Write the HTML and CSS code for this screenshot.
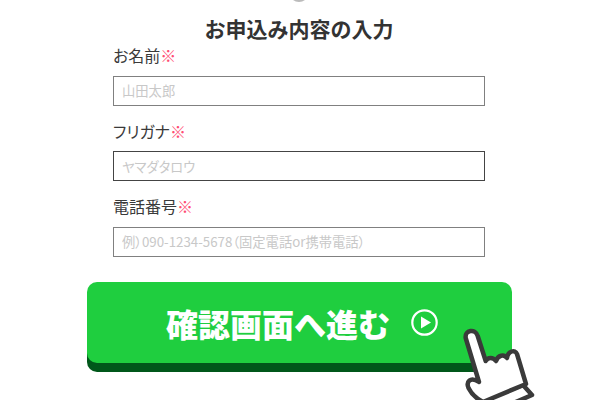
FILE: index.html
```html
<!DOCTYPE html>
<html lang="ja">
<head>
<meta charset="utf-8">
<title>お申込み内容の入力</title>
<link rel="stylesheet" href="styles.css">
</head>
<body>
<div class="page">
  <div class="knob-wrap"><div class="knob"></div></div>
  <h2 class="title">お申込み内容の入力</h2>
  <form class="form">
    <div class="field name-field">
      <label class="label">お名前<span class="req">※</span></label>
      <input class="input" type="text" placeholder="山田太郎">
    </div>
    <div class="field">
      <label class="label">フリガナ<span class="req">※</span></label>
      <input class="input dark" type="text" placeholder="ヤマダタロウ">
    </div>
    <div class="field">
      <label class="label">電話番号<span class="req">※</span></label>
      <input class="input" type="text" placeholder="例）090-1234-5678（固定電話or携帯電話）">
    </div>
  </form>
  <div class="cta-wrap">
    <button class="cta" type="button">
      <span>確認画面へ進む</span>
      <svg class="play" viewBox="0 0 27 27" width="27" height="27"><circle cx="13.5" cy="13.5" r="12.2" fill="none" stroke="#fff" stroke-width="2.2"/><path d="M10 7.5 20 13.5 10 19.5Z" fill="#fff"/></svg>
    </button>
    <svg class="hand" viewBox="0 0 85 75" width="85" height="75">
      <path d="M68 60 77 70 40 86 26 76Z" fill="#fff" stroke="#3a3a3a" stroke-width="4.5" stroke-linejoin="round"/>
      <path d="M10.7 13C9.5 5 20.5 3 22.7 11L30.7 36C33 32 38 32 41 36C43 30 49 29 52 33C53 26 60 24 62 29L71 59 28 77C22 74 17 70 13.5 63C11 57 15 51 24 57Z" fill="#fff" stroke="#3a3a3a" stroke-width="4.5" stroke-linejoin="round"/>
    </svg>
  </div>
</div>
</body>
</html>
```
FILE: styles.css
```css
* { box-sizing: border-box; }
html, body { margin: 0; padding: 0; background: #fff; }
body { width: 600px; height: 400px; overflow: hidden; font-family: "Noto Sans CJK JP", "Noto Sans", sans-serif; color: #333; }
.page { width: 598px; display: flex; flex-direction: column; align-items: center; }
.knob-wrap { width: 20px; height: 2px; overflow: hidden; }
.knob { width: 20px; height: 20px; margin-top: -18px; border-radius: 50%; background: #bbb; }
.title { margin: 10.5px 0 0; font-size: 21px; line-height: 30px; font-weight: 700; color: #333; }
.form { width: 372px; display: flex; flex-direction: column; gap: 13px; margin-top: 0.5px; }
.field { display: flex; flex-direction: column; gap: 8.5px; }
.label { font-size: 16px; line-height: 24px; color: #3a3a3a; font-feature-settings: "palt"; }
.req { color: #ff4d73; }
.input { width: 372px; height: 30px; padding: 0 8px; border: 1px solid #808080; border-radius: 0; background: #fff; font: 13.3px/28px "Noto Sans CJK JP", "Noto Sans", sans-serif; font-feature-settings: "palt"; outline: none; }
.input.dark { border-color: #444; }
.input::placeholder { color: #c8c8c8; opacity: 1; }
.cta-wrap { position: relative; margin-top: 25.5px; }
.cta { width: 425px; height: 81px; padding: 0 0 0 6px; display: flex; align-items: center; justify-content: center; gap: 21px; border: 0; border-radius: 10px; background: #1fce3f; box-shadow: 0 9px 0 #00571a; color: #fff; font: 900 32px/1 "Noto Sans CJK JP", "Noto Sans", sans-serif; }
.hand { position: absolute; left: 368px; top: 43px; overflow: visible; }
```
